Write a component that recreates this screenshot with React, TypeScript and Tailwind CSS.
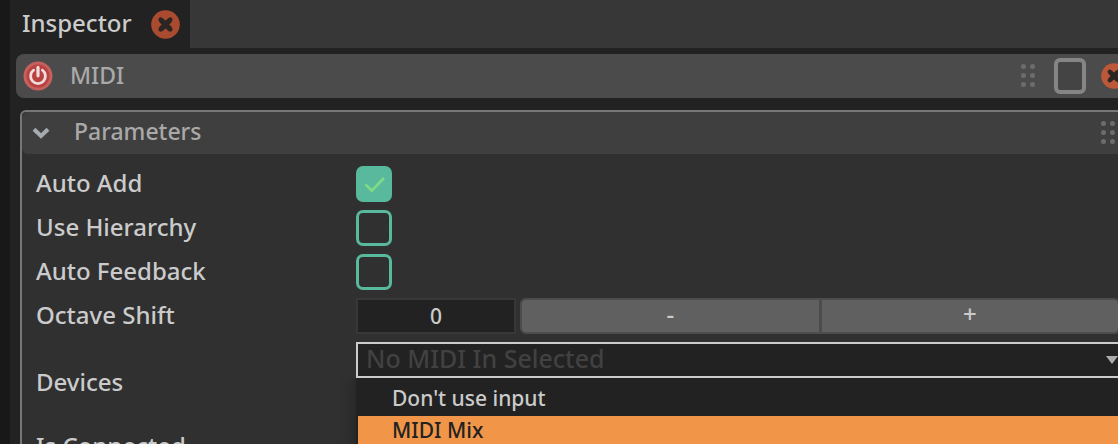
import { useState } from "react";

function CloseIcon({ className, color }: { className: string; color: string }) {
  return (
    <svg viewBox="0 0 30 30" className={className} aria-hidden="true">
      <circle cx="15" cy="15" r="14.8" fill={color} />
      <path d="M10.2 10.2 19.8 19.8M19.8 10.2 10.2 19.8" stroke="#2b2523" strokeWidth="5.4" strokeLinecap="butt" />
      <path d="M10 10 20 20M20 10 10 20" stroke="#2b2523" strokeWidth="4.6" strokeLinecap="round" />
    </svg>
  );
}

function PowerIcon() {
  return (
    <svg viewBox="0 0 30 30" className="size-[30px]" aria-hidden="true">
      <circle cx="15" cy="15" r="14.5" fill="#c4605d" />
      <circle cx="15" cy="15" r="11.5" fill="#b9413f" />
      <path d="M10.6 9.2a7.4 7.4 0 1 0 8.8 0" fill="none" stroke="#efdcdc" strokeWidth="2.8" strokeLinecap="round" />
      <path d="M15 6.4v8.4" stroke="#efdcdc" strokeWidth="3.2" strokeLinecap="round" />
    </svg>
  );
}

function Grip() {
  return (
    <svg viewBox="0 0 16 26" className="h-[26px] w-4 shrink-0" fill="#6c6c6c" aria-hidden="true">
      {[4, 13].map((x) =>
        [4, 13, 22].map((y) => <circle key={`${x}-${y}`} cx={x - 0.5} cy={y - 0.5} r="2.5" />),
      )}
    </svg>
  );
}

function ToggleRow({ id, label, initial = false }: { id: string; label: string; initial?: boolean }) {
  const [on, setOn] = useState(initial);
  return (
    <div className="flex h-9 items-center">
      <label htmlFor={id} className="w-80 shrink-0 pb-0.5">
        {label}
      </label>
      <span className="grid size-9">
        <input
          id={id}
          type="checkbox"
          checked={on}
          onChange={() => setOn(!on)}
          className="col-start-1 row-start-1 size-9 appearance-none rounded-[7px] border-3 border-[#58b99d] checked:bg-[#58b99d]"
        />
        {on && (
          <svg viewBox="0 0 36 36" className="pointer-events-none col-start-1 row-start-1 size-9" aria-hidden="true">
            <path d="M9.5 18.4 15.8 24.6 28 12" fill="none" stroke="#7fdc85" strokeWidth="2.6" />
          </svg>
        )}
      </span>
    </div>
  );
}

const inputs = ["Don't use input", "MIDI Mix"];

export default function App() {
  const [octave, setOctave] = useState(0);
  const [device, setDevice] = useState("");
  return (
    <div className="flex h-screen overflow-hidden bg-[#181818] pl-2.5 font-['Noto_Sans','Open_Sans',sans-serif] text-[24px] leading-8 font-medium text-[#cbcbcb]">
      <main className="min-w-0 flex-1 bg-[#222222]">
        <nav className="flex h-12 bg-[#373737]">
          <div className="flex w-[180px] items-center justify-between bg-[#222222] pr-2.5 pl-3">
            <span className="pb-0.5">Inspector</span>
            <button aria-label="Close Inspector">
              <CloseIcon className="size-[29px]" color="#aa4b30" />
            </button>
          </div>
        </nav>

        <div className="-mr-5 pt-1.5 pl-1.5">
          <header className="flex h-11 items-center rounded-lg bg-[#4b4b4b] pr-[11px] pl-[7px] text-[23px] text-[#a9a9a9]">
            <button aria-label="Toggle MIDI">
              <PowerIcon />
            </button>
            <h1 className="ml-[17px] flex-1 pb-0.5">MIDI</h1>
            <Grip />
            <button aria-label="Color" className="ml-[18px] h-9 w-8 rounded-md border-4 border-[#858585] bg-[#444444]" />
            <button aria-label="Remove MIDI" className="ml-[15px]">
              <CloseIcon className="size-[26px]" color="#bb583a" />
            </button>
          </header>

          <section className="mt-3 ml-1 rounded-t-md border-2 border-[#777777] bg-[#303030] pb-3">
            <header className="flex h-[42px] items-center rounded-md bg-[#3f3f3f] pr-5 pl-2.5 text-[23px] text-[#a9a9a9]">
              <button aria-label="Collapse Parameters">
                <svg viewBox="0 0 18 14" className="h-3.5 w-[18px]" aria-hidden="true">
                  <path d="M2 3.2 9 10l7-6.8" fill="none" stroke="#a5abae" strokeWidth="4" />
                </svg>
              </button>
              <h2 className="ml-6 flex-1 pb-1">Parameters</h2>
              <Grip />
            </header>

            <div className="flex flex-col gap-2 pt-3 pr-4 pl-3.5">
              <ToggleRow id="auto-add" label="Auto Add" initial />
              <ToggleRow id="use-hierarchy" label="Use Hierarchy" />
              <ToggleRow id="auto-feedback" label="Auto Feedback" />

              <div className="flex h-9 items-center">
                <label htmlFor="octave" className="w-80 shrink-0 pb-0.5">
                  Octave Shift
                </label>
                <input
                  id="octave"
                  value={octave}
                  onChange={(e) => setOctave(Number(e.target.value) || 0)}
                  className="h-9 w-40 shrink-0 border-2 border-[#373737] bg-[#222222] text-center text-[21px]"
                />
                <div className="ml-1 flex h-9 flex-1 text-[24px] leading-7">
                  <button
                    onClick={() => setOctave(octave - 1)}
                    className="flex-1 rounded-l-md border-2 border-[#4c4c4c] bg-[#606060] pb-1"
                  >
                    -
                  </button>
                  <button
                    onClick={() => setOctave(octave + 1)}
                    className="flex-1 rounded-r-md border-2 border-l border-[#4c4c4c] bg-[#606060] pb-1"
                  >
                    +
                  </button>
                </div>
              </div>

              <div className="flex h-20">
                <label htmlFor="device" className="w-80 shrink-0 pt-6">
                  Devices
                </label>
                <div className="relative h-9 flex-1">
                  <div className="grid items-center">
                    <select
                      id="device"
                      value={device}
                      onChange={(e) => setDevice(e.target.value)}
                      className="col-start-1 row-start-1 h-9 w-full appearance-none border-2 border-[#cccccc] bg-[#222222] pb-1 pl-2 text-[25px] leading-7 text-[#414141]"
                    >
                      <option value="">No MIDI In Selected</option>
                      {inputs.map((name) => (
                        <option key={name}>{name}</option>
                      ))}
                    </select>
                    <svg
                      viewBox="0 0 12 8"
                      className="pointer-events-none col-start-1 row-start-1 mr-0.5 h-2 w-3 justify-self-end"
                      aria-hidden="true"
                    >
                      <path d="M0 0h12L6 8z" fill="#acacac" />
                    </svg>
                  </div>
                  <ul
                    role="listbox"
                    aria-label="MIDI inputs"
                    className="absolute inset-x-0 top-full border-2 border-t-0 border-[#222222] bg-[#222222] pt-1.5 text-[21px] shadow-[0_0_16px_rgba(0,0,0,0.3)] [clip-path:inset(0_-20px_-20px_-20px)]"
                  >
                    {inputs.map((name) => (
                      <li
                        key={name}
                        role="option"
                        aria-selected={name === "MIDI Mix"}
                        onClick={() => setDevice(name)}
                        className="h-8 pl-[34px] leading-7 aria-selected:bg-[#f19648] aria-selected:text-[#222222]"
                      >
                        {name}
                      </li>
                    ))}
                  </ul>
                </div>
              </div>

              <div>Is Connected</div>
            </div>
          </section>
        </div>
      </main>
    </div>
  );
}
